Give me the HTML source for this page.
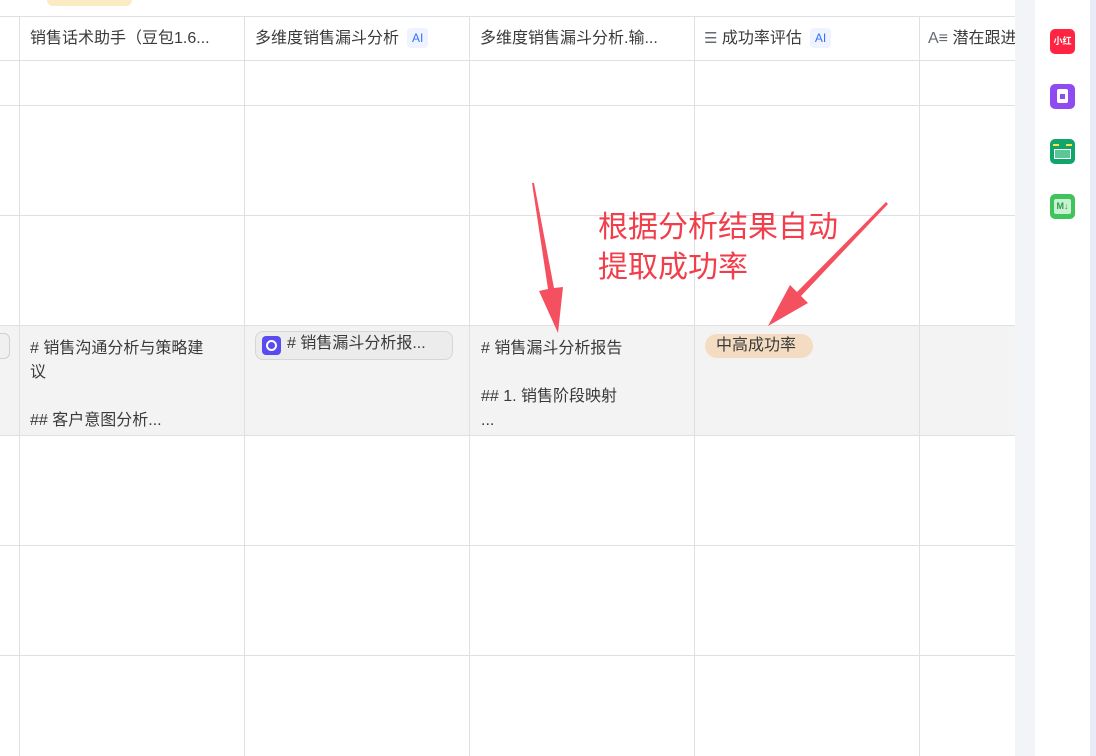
<!DOCTYPE html>
<html><head><meta charset="utf-8"><style>
*{margin:0;padding:0;box-sizing:border-box}
body{width:1096px;height:756px;overflow:hidden;background:#fff;font-family:"Liberation Sans","Noto Sans CJK SC",sans-serif;position:relative;color:#1f2329}
.badge{position:absolute;left:47px;top:-8px;width:85px;height:14px;background:#faebc2;border-radius:6px}
.h{position:absolute;left:0;height:1px;width:1015px;background:#dee0e3}
.v{position:absolute;top:16px;width:1px;height:740px;background:#dee0e3}
.row{position:absolute;left:0;top:326px;width:1015px;height:109px;background:#f3f3f3}
.t{position:absolute;font-size:16px;color:#3a3a3a;white-space:nowrap;line-height:24px}
.ai{display:inline-block;font-size:12px;color:#3370ff;background:#eef3ff;border-radius:4px;padding:0 5px;line-height:20px;margin-left:8px;vertical-align:1px}
.side1{position:absolute;left:1015px;top:0;width:20px;height:756px;background:#f3f4f7}
.side2{position:absolute;left:1090px;top:0;width:6px;height:756px;background:#e8ebf8}
.ic{position:absolute;left:1050px;width:25px;height:25px;border-radius:5px}
.red{color:#f23d4a;position:absolute;left:598px;top:208px;font-size:30px;line-height:40px;white-space:nowrap}
</style></head><body>
<div class="badge"></div>
<div class="row"></div>
<div class="h" style="top:16px"></div>
<div class="h" style="top:60px"></div>
<div class="h" style="top:105px"></div>
<div class="h" style="top:215px"></div>
<div class="h" style="top:325px"></div>
<div class="h" style="top:435px"></div>
<div class="h" style="top:545px"></div>
<div class="h" style="top:655px"></div>
<div class="v" style="left:19px"></div>
<div class="v" style="left:244px"></div>
<div class="v" style="left:469px"></div>
<div class="v" style="left:694px"></div>
<div class="v" style="left:919px"></div>
<div class="t" style="left:30px;top:27px">销售话术助手（豆包1.6...</div>
<div class="t" style="left:255px;top:27px">多维度销售漏斗分析<span class="ai">AI</span></div>
<div class="t" style="left:480px;top:27px">多维度销售漏斗分析.输...</div>
<div class="t" style="left:704px;top:27px"><span style="color:#646a73;font-size:15px">☰</span> 成功率评估<span class="ai">AI</span></div>
<div class="t" style="left:928px;top:27px;width:87px;overflow:hidden"><span style="color:#646a73">A≡</span> 潜在跟进</div>
<div style="position:absolute;left:-10px;top:333px;width:20px;height:26px;border:1px solid #d0d0d0;border-radius:6px;background:#f0f0f0"></div>
<div class="t" style="left:30px;top:337px;line-height:24px">#&nbsp;销售沟通分析与策略建<br>议<br><br>##&nbsp;客户意图分析...</div>
<div style="position:absolute;left:255px;top:331px;width:198px;height:29px;border:1px solid #d6d6d6;border-radius:8px;background:#ececec"></div>
<div style="position:absolute;left:262px;top:336px;width:19px;height:19px;border-radius:4px;background:#5a4bf0"><div style="position:absolute;left:4px;top:4px;width:11px;height:11px;border:2.5px solid #fff;border-radius:50%"></div></div>
<div class="t" style="left:287px;top:332px">#&nbsp;销售漏斗分析报...</div>
<div class="t" style="left:481px;top:337px">#&nbsp;销售漏斗分析报告<br><br>##&nbsp;1. 销售阶段映射<br>...</div>
<div style="position:absolute;left:705px;top:334px;width:108px;height:24px;border-radius:12px;background:#f3dcc2"></div>
<div class="t" style="left:716px;top:334px">中高成功率</div>
<div class="red">根据分析结果自动<br>提取成功率</div>
<svg style="position:absolute;left:0;top:0" width="1015" height="756">
<polygon points="532,183 534,183 554,288 563,287 558,333 539,291 548,289" fill="#f5505f"/>
<polygon points="886,202 888,204 801,296 808,303 768,326 790,285 797,292" fill="#f5505f"/>
</svg>
<div class="side1"></div>
<div class="side2"></div>
<div class="ic" style="top:29px;background:#ff2442;color:#fff;font-size:9px;font-weight:bold;line-height:25px;text-align:center">小红书</div>
<div class="ic" style="top:84px;background:#8f4bf0"><div style="position:absolute;left:7px;top:5px;width:11px;height:14px;background:#fff;border-radius:2px"></div><div style="position:absolute;left:10px;top:10px;width:5px;height:5px;background:#8f4bf0"></div></div>
<div class="ic" style="top:139px;background:#0fa56b"><div style="position:absolute;left:3px;top:5px;width:19px;height:3px;border-top:2px dashed #ffe14d"></div><div style="position:absolute;left:4px;top:10px;width:17px;height:10px;background:#5cc795;border:1px solid #fff"></div></div>
<div class="ic" style="top:194px;background:#3fc35d"><div style="position:absolute;left:4px;top:5px;width:17px;height:15px;background:#c9f0d0;border-radius:2px;color:#2a9d48;font-size:9px;font-weight:bold;text-align:center;line-height:15px">M↓</div></div>
</body></html>
